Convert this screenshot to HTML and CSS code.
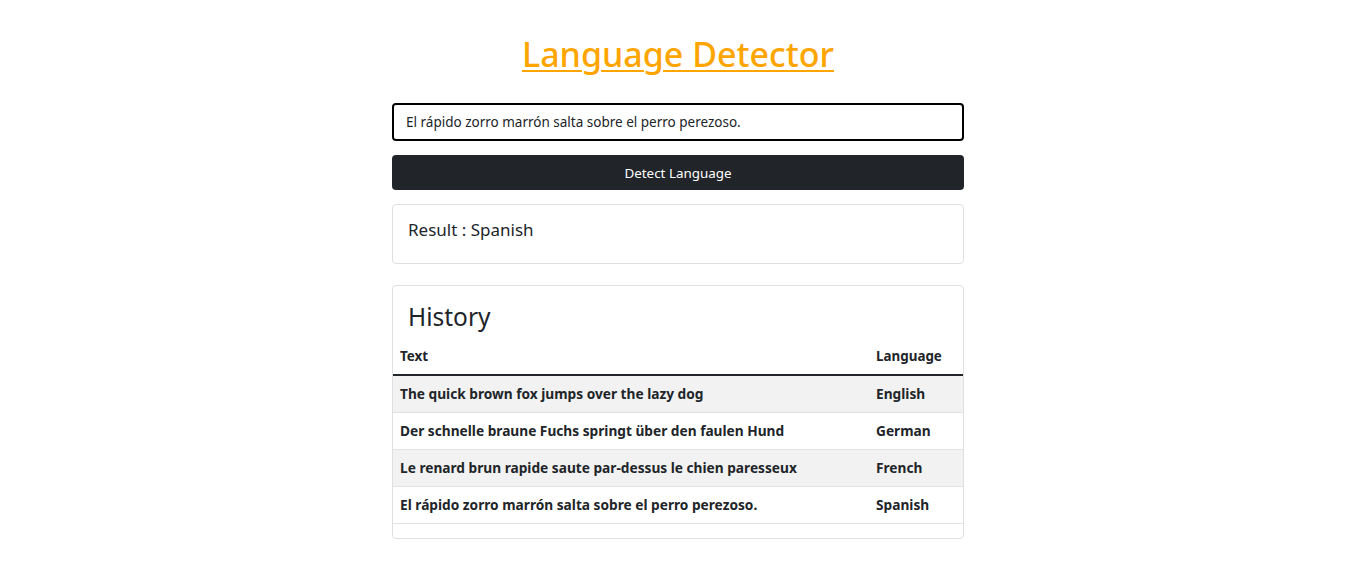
FILE: index.html
```html
<!DOCTYPE html>
<html lang="en">
<head>
<meta charset="utf-8">
<title>Language Detector</title>
<link rel="stylesheet" href="styles.css">
</head>
<body>
<div class="page">
  <main class="wrap">
    <h1 class="title"><a href="#">Language Detector</a></h1>
    <form class="form">
      <input class="input" type="text" value="El rápido zorro marrón salta sobre el perro perezoso.">
      <button class="btn" type="button">Detect Language</button>
    </form>
    <section class="card result">
      <h4 class="result-text">Result : Spanish</h4>
    </section>
    <section class="card history">
      <h2 class="history-title">History</h2>
      <table class="table">
        <thead>
          <tr><th class="c-text">Text</th><th class="c-lang">Language</th></tr>
        </thead>
        <tbody>
          <tr class="odd"><td>The quick brown fox jumps over the lazy dog</td><td>English</td></tr>
          <tr><td>Der schnelle braune Fuchs springt über den faulen Hund</td><td>German</td></tr>
          <tr class="odd"><td>Le renard brun rapide saute par-dessus le chien paresseux</td><td>French</td></tr>
          <tr><td>El rápido zorro marrón salta sobre el perro perezoso.</td><td>Spanish</td></tr>
        </tbody>
      </table>
    </section>
  </main>
</div>
</body>
</html>
```

FILE: styles.css
```css
* { box-sizing: border-box; }
html, body { margin: 0; padding: 0; background: #fff; }
body {
  font-family: "Segoe UI", "Noto Sans", "Open Sans", sans-serif;
  color: #212529;
}
.page {
  display: flex;
  justify-content: center;
  padding-left: 10px;
}
.wrap {
  width: 572px;
  display: flex;
  flex-direction: column;
}
.title {
  margin: 30px 0 0;
  height: 73px;
  text-align: center;
  font-size: 34px;
  font-weight: 500;
  line-height: 48px;
}
.title a { color: #ffa500; text-decoration: underline; text-underline-offset: 3px; text-decoration-thickness: 2px; }
.form { display: flex; flex-direction: column; gap: 14px; }
.input {
  height: 38px;
  width: 100%;
  border: 2px solid #000;
  border-radius: 4px;
  padding: 0 12px;
  font-family: inherit;
  font-size: 13.5px;
  color: #212529;
  outline: none;
}
.btn {
  height: 35px;
  width: 100%;
  border: 0;
  border-radius: 4px;
  background: #212529;
  color: #fff;
  font-family: inherit;
  font-size: 13.4px;
}
.card {
  border: 1px solid #dfdfdf;
  border-radius: 4px;
  background: #fff;
}
.result {
  margin-top: 14px;
  height: 60px;
  padding: 13px 15px;
}
.result-text { margin: 0; font-size: 17px; font-weight: 400; line-height: 24px; }
.history {
  margin-top: 21px;
  padding-bottom: 14px;
}
.history-title {
  margin: 0;
  padding: 14px 15px 7px;
  font-size: 24.5px;
  font-weight: 400;
  line-height: 34px;
}
.table { width: 100%; border-collapse: collapse; font-size: 13.7px; font-weight: 700; }
.table th, .table td { text-align: left; padding: 0 7px; height: 37px; border-bottom: 1px solid #dee2e6; }
.table th { height: 34px; border-bottom: 2px solid #212529; vertical-align: top; padding-top: 6px; font-size: 13.4px; }
.c-lang { width: 94px; }
.odd td { background: #f2f2f2; }
```
